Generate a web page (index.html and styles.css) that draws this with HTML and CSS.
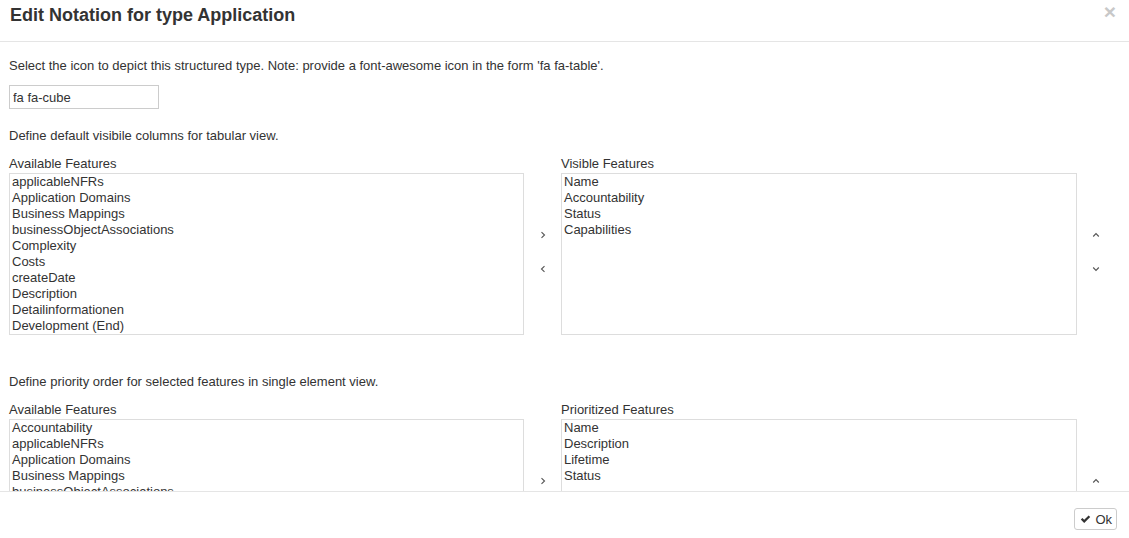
FILE: index.html
```html
<!DOCTYPE html>
<html lang="en">
<head>
    <meta charset="UTF-8">
    <title>Edit Notation</title>
    <link rel="stylesheet" href="styles.css">
</head>
<body>
    <div class="modal">
        <div class="modal-header">
            <h4 class="modal-title">Edit Notation for type Application</h4>
            <span class="close">&times;</span>
        </div>

        <div class="modal-body">
            <p class="intro">Select the icon to depict this structured type. Note: provide a font-awesome icon in the form 'fa fa-table'.</p>
            <input class="icon-input" type="text" value="fa fa-cube">

            <p class="hint">Define default visibile columns for tabular view.</p>
            <div class="picker">
                <div class="label">Available Features</div>
                <div></div>
                <div class="label">Visible Features</div>
                <div></div>

                <ul class="list">
                    <li>applicableNFRs</li>
                    <li>Application Domains</li>
                    <li>Business Mappings</li>
                    <li>businessObjectAssociations</li>
                    <li>Complexity</li>
                    <li>Costs</li>
                    <li>createDate</li>
                    <li>Description</li>
                    <li>Detailinformationen</li>
                    <li>Development (End)</li>
                    <li>Development (Start)</li>
                </ul>
                <div class="arrows">
                    <span class="arrow"><svg width="6" height="8" viewBox="0 0 6 8"><path d="M1.5 1.2 L4.5 4 L1.5 6.8" fill="none" stroke="#555" stroke-width="1.1"/></svg></span>
                    <span class="arrow"><svg width="6" height="8" viewBox="0 0 6 8"><path d="M4.5 1.2 L1.5 4 L4.5 6.8" fill="none" stroke="#555" stroke-width="1.1"/></svg></span>
                </div>
                <ul class="list">
                    <li>Name</li>
                    <li>Accountability</li>
                    <li>Status</li>
                    <li>Capabilities</li>
                </ul>
                <div class="arrows order">
                    <span class="arrow"><svg width="8" height="6" viewBox="0 0 8 6"><path d="M1.2 4.5 L4 1.5 L6.8 4.5" fill="none" stroke="#555" stroke-width="1.1"/></svg></span>
                    <span class="arrow"><svg width="8" height="6" viewBox="0 0 8 6"><path d="M1.2 1.5 L4 4.5 L6.8 1.5" fill="none" stroke="#555" stroke-width="1.1"/></svg></span>
                </div>
            </div>

            <p class="hint second">Define priority order for selected features in single element view.</p>
            <div class="picker">
                <div class="label">Available Features</div>
                <div></div>
                <div class="label">Prioritized Features</div>
                <div></div>

                <ul class="list">
                    <li>Accountability</li>
                    <li>applicableNFRs</li>
                    <li>Application Domains</li>
                    <li>Business Mappings</li>
                    <li>businessObjectAssociations</li>
                    <li>Complexity</li>
                    <li>Costs</li>
                    <li>createDate</li>
                    <li>Detailinformationen</li>
                    <li>Development (End)</li>
                </ul>
                <div class="arrows">
                    <span class="arrow"><svg width="6" height="8" viewBox="0 0 6 8"><path d="M1.5 1.2 L4.5 4 L1.5 6.8" fill="none" stroke="#555" stroke-width="1.1"/></svg></span>
                    <span class="arrow"><svg width="6" height="8" viewBox="0 0 6 8"><path d="M4.5 1.2 L1.5 4 L4.5 6.8" fill="none" stroke="#555" stroke-width="1.1"/></svg></span>
                </div>
                <ul class="list">
                    <li>Name</li>
                    <li>Description</li>
                    <li>Lifetime</li>
                    <li>Status</li>
                </ul>
                <div class="arrows order">
                    <span class="arrow"><svg width="8" height="6" viewBox="0 0 8 6"><path d="M1.2 4.5 L4 1.5 L6.8 4.5" fill="none" stroke="#555" stroke-width="1.1"/></svg></span>
                    <span class="arrow"><svg width="8" height="6" viewBox="0 0 8 6"><path d="M1.2 1.5 L4 4.5 L6.8 1.5" fill="none" stroke="#555" stroke-width="1.1"/></svg></span>
                </div>
            </div>
        </div>

        <div class="modal-footer">
            <button class="btn-ok">
                <svg width="11" height="9" viewBox="0 0 11 9"><path d="M0.8 4.6 L2.4 3 L4.2 4.8 L8.6 0.4 L10.2 2 L4.2 8 Z" fill="#333"/></svg>
                Ok
            </button>
        </div>
    </div>
</body>
</html>
```

FILE: styles.css
```css
html,
body {
    margin: 0;
    padding: 0;
    overflow: hidden;
}

body {
    font-family: "Liberation Sans", Arial, sans-serif;
    font-size: 13px;
    color: #333;
    background: #ffffff;
}

.modal {
    width: 1129px;
    height: 538px;
}

.modal-header {
    height: 41px;
    border-bottom: 1px solid #e5e5e5;
    display: flex;
    justify-content: space-between;
    align-items: flex-start;
    padding: 0 13px 0 10px;
}

.modal-title {
    margin: 5px 0 0;
    font-size: 18px;
    line-height: 20px;
    font-weight: bold;
    color: #333;
}

.close {
    margin-top: 1px;
    font-size: 21px;
    line-height: 21px;
    font-weight: bold;
    color: #c8c8c8;
}

.modal-body {
    height: 449px;
    overflow: hidden;
    padding: 0 9px;
}

.intro {
    margin: 15px 0 0;
    line-height: 18px;
}

.icon-input {
    display: block;
    box-sizing: border-box;
    width: 150px;
    height: 24px;
    margin-top: 10px;
    padding: 0 3px;
    border: 1px solid #cccccc;
    font-family: "Liberation Sans", Arial, sans-serif;
    font-size: 13px;
    color: #333;
    outline: none;
}

.hint {
    margin: 18px 0 0;
    line-height: 18px;
}

.hint.second {
    margin-top: 38px;
}

.picker {
    display: grid;
    grid-template-columns: 515px 37px 516px 1fr;
    column-gap: 0;
    margin-top: 9px;
}

.label {
    line-height: 18px;
    padding-top: 1px;
}

.list {
    list-style: none;
    margin: 0;
    padding: 0 2px;
    height: 160px;
    overflow: hidden;
    border: 1px solid #dddddd;
}

.list li {
    line-height: 16px;
    white-space: nowrap;
}

.arrows {
    display: flex;
    flex-direction: column;
    align-items: center;
    justify-content: center;
    gap: 26px;
    padding-bottom: 4px;
}

.arrows.order {
    padding-right: 5px;
}

.arrow {
    display: flex;
    width: 8px;
    height: 8px;
    align-items: center;
    justify-content: center;
}

.modal-footer {
    border-top: 1px solid #e5e5e5;
    padding: 16px 12px 0;
    display: flex;
    justify-content: flex-end;
}

.btn-ok {
    display: flex;
    align-items: center;
    gap: 4px;
    height: 22px;
    padding: 0 4px 0 5px;
    border: 1px solid #cccccc;
    border-radius: 3px;
    background: #ffffff;
    font-family: "Liberation Sans", Arial, sans-serif;
    font-size: 13px;
    color: #333;
}
```
